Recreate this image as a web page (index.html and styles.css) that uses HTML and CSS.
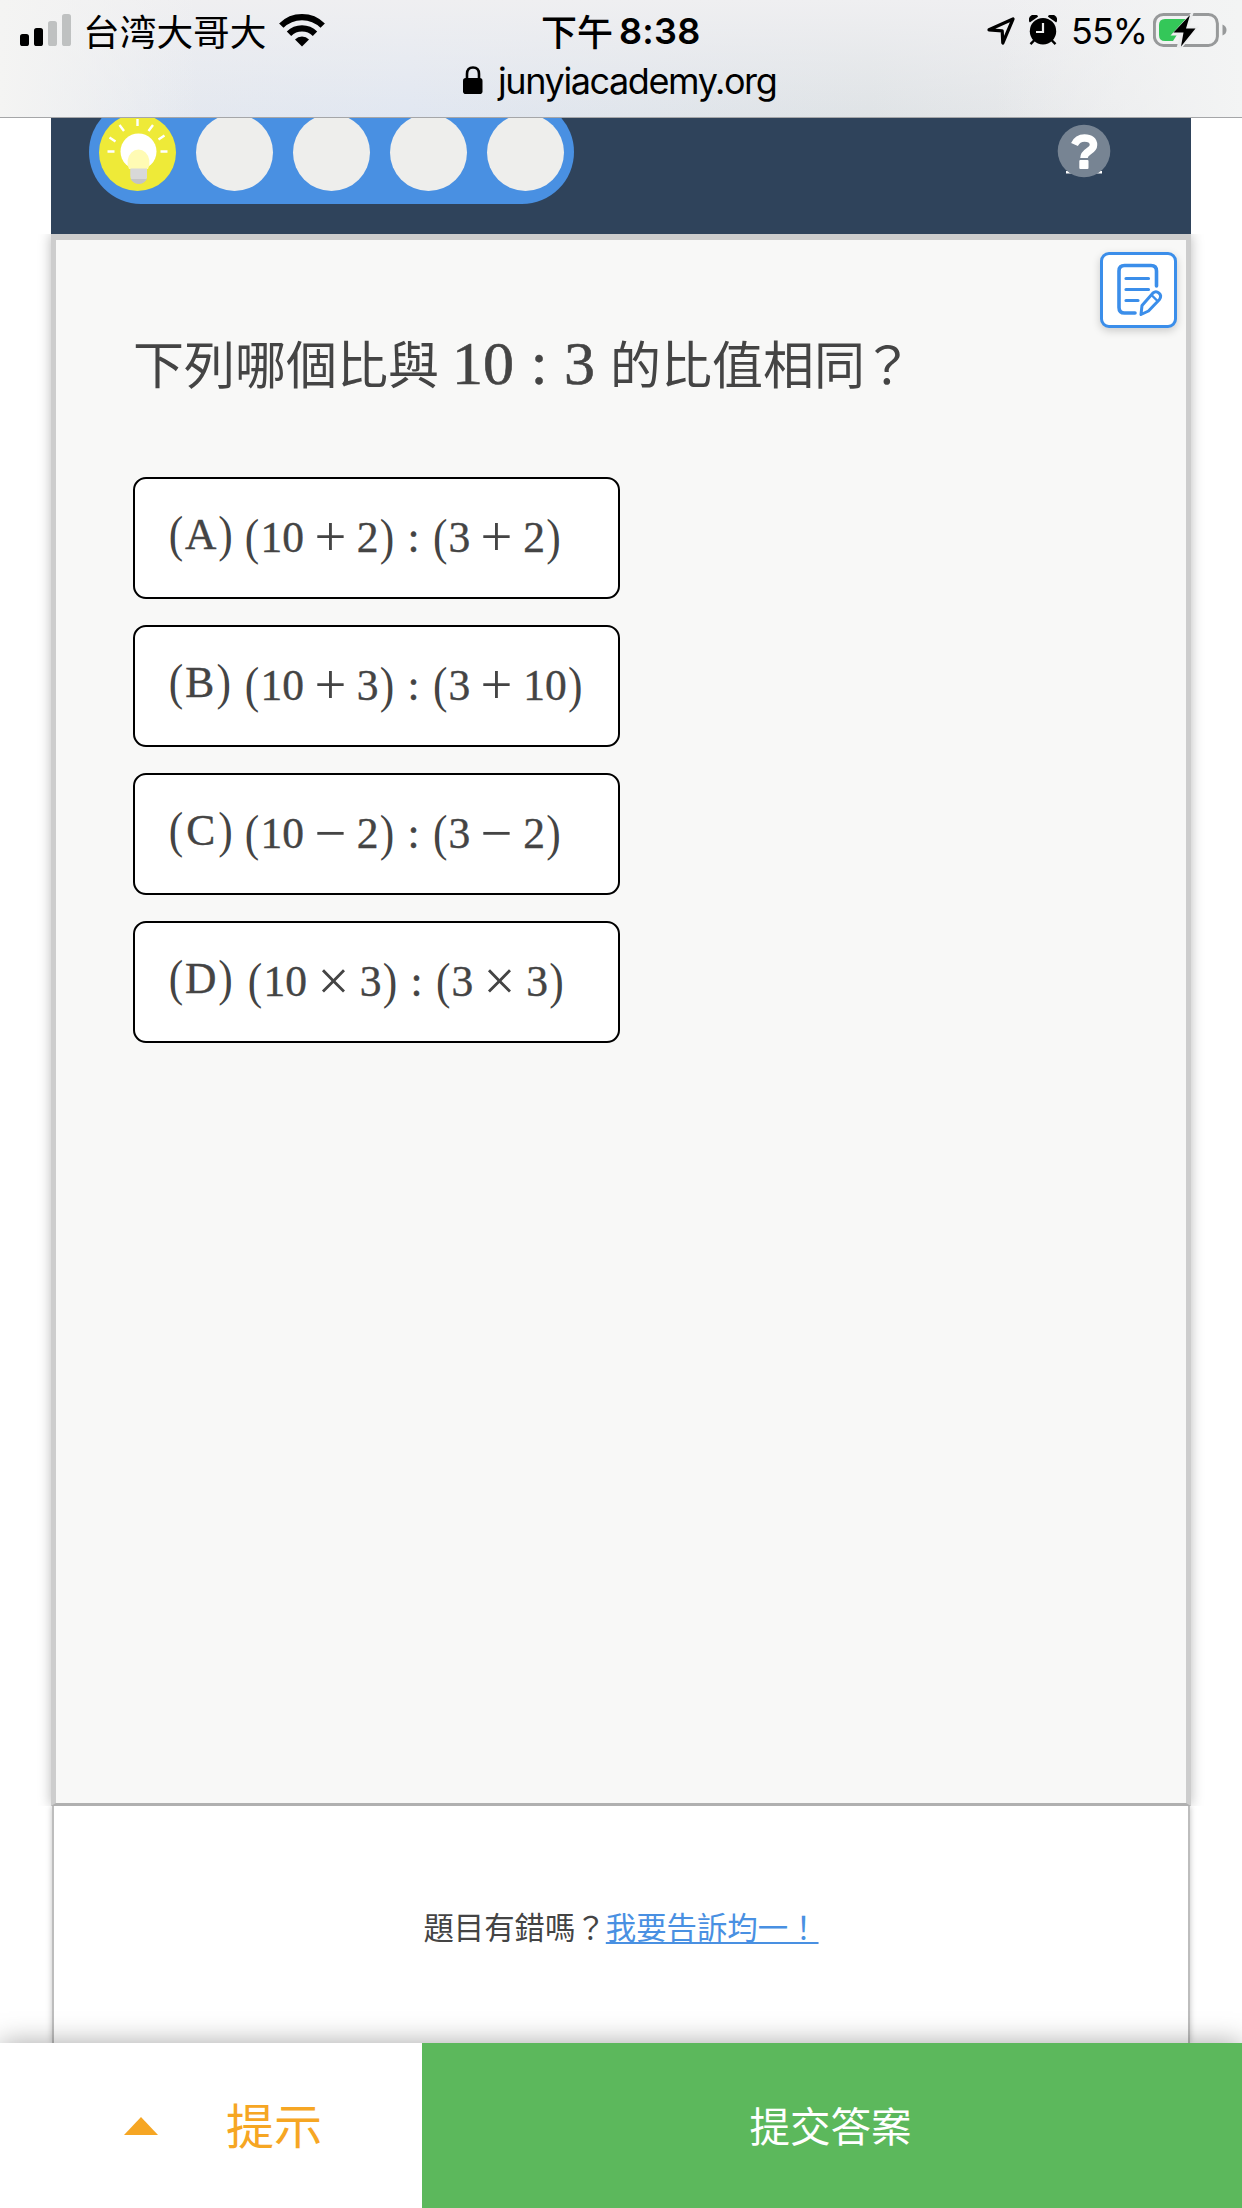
FILE: index.html
```
<!DOCTYPE html>
<html lang="zh-Hant">
<head>
<meta charset="utf-8">
<title>均一教育平台</title>
<link rel="stylesheet" href="styles.css">
</head>
<body>
<header class="browser-bar">
  <div class="status">
    <div class="status-left">
      <svg class="signal" width="52" height="34" viewBox="0 0 52 34"><rect x="0" y="20" width="9" height="12" rx="2.6"/><rect x="14" y="14" width="9" height="18" rx="2.6"/><g fill="#bfc1c1"><rect x="28" y="7" width="9" height="25" rx="2.6"/><rect x="42" y="0" width="9" height="32" rx="2.6"/></g></svg>
      <span class="carrier">台湾大哥大</span>
      <svg class="wifi" width="46" height="34" viewBox="0 0 46 34"><g fill="none" stroke="#000" stroke-width="6.2"><path d="M2.3 12.6a29.3 29.3 0 0 1 41.4 0"/><path d="M10 20.8a18.4 18.4 0 0 1 26 0"/></g><path d="M16 26.5a9.8 9.8 0 0 1 14 0L23 33.5z"/></svg>
    </div>
    <div class="clock"><span class="ampm">下午</span><span class="time">8:38</span></div>
    <div class="status-right">
      <svg class="locate" width="28" height="28" viewBox="0 0 28 28"><path d="M2 12.8 26 2 15.8 26l-.6-12.2z" fill="none" stroke="#000" stroke-width="3.2" stroke-linejoin="round"/></svg>
      <svg class="alarm" width="28" height="31" viewBox="0 0 28 31"><circle cx="14" cy="16.2" r="13.2"/><path d="M1 6.500A4.6 4.6 0 0 1 8.2 1.300zM27 6.500A4.6 4.6 0 0 0 19.8 1.300z" stroke="#000" stroke-width="1.500" stroke-linejoin="round"/><path d="m5.5 25-4 4.2M22.5 25l4 4.2" stroke="#000" stroke-width="2.4"/><path d="M14 8v9H7" fill="none" stroke="#eee" stroke-width="2.2"/></svg>
      <span class="percent">55%</span>
      <svg class="battery" width="74" height="36" viewBox="0 0 74 36"><rect x="1.4" y="2.4" width="63" height="31" rx="9" fill="none" stroke="#97999a" stroke-width="3"/><path d="M69.5 12.5q4 1.5 4 5.5t-4 5.5z" fill="#97999a"/><path d="M12 7h22L20 29h-8q-6 0-6-6V13q0-6 6-6z" fill="#34c759"/><path d="M38 1 17.5 23.5H27L23.5 36h5.5l17-21.5H36L40.500 1z" fill="#ecedee"/><path d="M37 3 20.500 20.500h10L28 34.500l14.500-18h-9.500z"/></svg>
    </div>
  </div>
  <div class="address">
    <svg class="lock" width="20" height="28" viewBox="0 0 20 28"><path d="M4 14V8q0-6.500 6-6.500T16 8v6" fill="none" stroke="#000" stroke-width="2.600"/><rect x="0" y="12" width="19.500" height="16" rx="2.800"/></svg>
    <span class="url">junyiacademy.org</span>
  </div>
</header>

<main class="page">
  <nav class="task-bar">
    <div class="progress">
      <span class="step step-hint">
        <svg width="77" height="80" viewBox="0 0 77 80"><g stroke="#fff" stroke-width="2.400"><path d="M8.500 37.500h7M61.500 37.500h7M10.500 23.500l6 4M65.500 21.500l-6 4M20.500 11l4.500 6M54 11l-4.500 6M38.500 5v7"/></g><circle cx="39.500" cy="37.500" r="18" fill="#fff"/><path d="M31.500 52h16.500v12q-3 5-8.200 5t-8.300-5z" fill="#d8d8d8"/><path d="M31.500 65h16.500q-3 5-8.200 5t-8.300-5z" fill="#c4c4c4"/><path d="M30 55a11 13 0 1 1 19 0z" fill="#fffbb4"/><path d="M31.500 54.500h16.500v8H31.500z" fill="#d8d8d8"/></svg>
      </span>
      <span class="step"></span><span class="step"></span><span class="step"></span><span class="step"></span>
    </div>
    <a class="help"><svg width="54" height="54" viewBox="0 0 54 54"><path d="M9 47h36v2.500H9z" fill="#fff"/><circle cx="27" cy="27" r="26.300" fill="#778493"/><path d="M17.500 20.500Q20.500 14 27.500 14c6 0 9 3 9 7 0 6.500-9.500 6-9.500 13" fill="none" stroke="#fff" stroke-width="7.500"/><rect x="22.300" y="36" width="9.200" height="9" rx="1" fill="#fff"/></svg></a>
  </nav>

  <section class="exercise">
    <button class="note"><svg width="48" height="54" viewBox="0 0 48 54"><g fill="none" stroke="#3b8eea" stroke-width="3.600" stroke-linecap="round" stroke-linejoin="round"><path d="M19 50H8.500Q3 50 3 44.500V8q0-5.500 5.500-5.500H35q5.500 0 5.500 5.500v15"/><path d="M10 15.500h22.500M10 26.500h22.500M10 37.500h12" stroke-width="3.200"/><path d="m25 51.500 1-9L37 30q3-2.500 6 .2t.5 6.300L32.500 48z" stroke-width="3"/><path d="m35.500 32 6 6" stroke-width="2.400"/></g></svg></button>
    <h1 class="question">下列哪個比與<span class="ratio"><i class="n2">10</i><i class="rel">:</i><i class="n1">3</i></span>的比值相同<span class="ask">？</span></h1>
    <ul class="choices">
      <li class="choice"><span class="label"><i class="p">(</i><i class="cap">A</i><i class="p">)</i></span><span class="math"><i class="p">(</i><i class="n2">10</i><i class="op">+</i><i class="n1">2</i><i class="p">)</i><i class="rel">:</i><i class="p">(</i><i class="n1">3</i><i class="op">+</i><i class="n1">2</i><i class="p">)</i></span></li>
      <li class="choice"><span class="label"><i class="p">(</i><i class="cap cap-b">B</i><i class="p">)</i></span><span class="math"><i class="p">(</i><i class="n2">10</i><i class="op">+</i><i class="n1">3</i><i class="p">)</i><i class="rel">:</i><i class="p">(</i><i class="n1">3</i><i class="op">+</i><i class="n2">10</i><i class="p">)</i></span></li>
      <li class="choice"><span class="label"><i class="p">(</i><i class="cap">C</i><i class="p">)</i></span><span class="math"><i class="p">(</i><i class="n2">10</i><i class="op">−</i><i class="n1">2</i><i class="p">)</i><i class="rel">:</i><i class="p">(</i><i class="n1">3</i><i class="op">−</i><i class="n1">2</i><i class="p">)</i></span></li>
      <li class="choice"><span class="label label-d"><i class="p">(</i><i class="cap">D</i><i class="p">)</i></span><span class="math"><i class="p">(</i><i class="n2">10</i><i class="op">×</i><i class="n1">3</i><i class="p">)</i><i class="rel">:</i><i class="p">(</i><i class="n1">3</i><i class="op">×</i><i class="n1">3</i><i class="p">)</i></span></li>
    </ul>
  </section>

  <section class="report">題目有錯嗎？<a class="report-link">我要告訴均一！</a></section>
</main>

<footer class="actions">
  <button class="hint"><span class="caret"></span><span class="hint-text">提示</span></button>
  <button class="submit">提交答案</button>
</footer>
</body>
</html>
```
FILE: styles.css
```
* { box-sizing: border-box; }

body {
  margin: 0;
  width: 1242px;
  height: 2208px;
  overflow: hidden;
  display: flex;
  flex-direction: column;
  background: #fff;
  color: #444;
  font-family: "Noto Sans CJK TC", sans-serif;
}

button { font: inherit; border: 0; padding: 0; margin: 0; }
i { font-style: normal; }
svg { display: block; flex: none; }

/* browser chrome */
.browser-bar {
  flex: none;
  height: 118px;
  border-bottom: 1px solid #a5a6a8;
  color: #000;
  background:
    linear-gradient(90deg, #f4f4f3 0%, rgba(244,244,243,0) 16%, rgba(242,243,243,0) 80%, #f3f4f4 100%),
    linear-gradient(rgba(239,239,241,1), rgba(239,239,241,0)),
    linear-gradient(90deg, #e6e9ee 0%, #e1e7f1 33%, #dfe3e6 70%, #e8e9eb 90%);
}
.status {
  display: grid;
  grid-template-columns: 541px 1fr 255px;
  height: 62px;
}
.status-left, .status-right, .clock { display: flex; align-items: flex-start; }
.status-left { padding-left: 20px; }
.signal { margin-top: 14px; }
.carrier {
  margin-left: 11px;
  font: 36.700px/60px "Noto Sans CJK SC", sans-serif;
  width: 186px;
  white-space: nowrap;
}
.wifi { margin: 13px 0 0 10px; }
.clock { line-height: 60px; }
.ampm { font-size: 36px; font-weight: 500; width: 78px; }
.time { font: 600 36px/62px Inter, sans-serif; letter-spacing: .3px; }
.locate { margin-top: 17px; }
.alarm { margin: 15px 0 0 14px; }
.percent { font: 36px/63px Inter, sans-serif; margin-left: 14px; width: 82px; letter-spacing: -1px; }
.battery { margin-top: 12px; }
.address { display: flex; padding-left: 463px; height: 44px; }
.lock { margin-top: 4px; }
.url { font: 36px/38px Inter, sans-serif; margin-left: 15px; letter-spacing: -1.400px; }

/* page */
.page {
  flex: 1;
  margin: 0 51px;
  min-height: 0;
  display: flex;
  flex-direction: column;
}
.task-bar {
  flex: none;
  height: 116px;
  overflow: hidden;
  background: #2f435b;
  display: flex;
  justify-content: space-between;
  align-items: flex-start;
  padding: 0 80px 0 38px;
}
.progress {
  display: flex;
  margin-top: -18px;
  width: 485px;
  height: 104px;
  border-radius: 52px;
  background: #4990e2;
  align-items: center;
  justify-content: space-around;
}
.step { width: 77px; height: 77px; border-radius: 50%; background: #eeeeec; overflow: hidden; }
.step-hint { background: #eeea38; }
.help { margin-top: 6px; }

.exercise {
  flex: none;
  height: 1572px;
  border: 5px solid #cdcdcd;
  border-top-width: 6px;
  border-bottom: 3px solid #b0b0b0;
  background: #f8f8f7;
  box-shadow: 0 0 12px rgba(0,0,0,.28);
  clip-path: inset(0 -16px);
  display: flex;
  flex-direction: column;
}
.note {
  align-self: flex-end;
  margin: 12px 9px 0 0;
  width: 77px;
  height: 76px;
  border: 3px solid #3b8eea;
  border-radius: 9px;
  background: #fff;
  box-shadow: 0 3px 8px rgba(0,0,0,.18);
  display: flex;
  align-items: center;
  justify-content: center;
  padding-left: 3px;
}
.question {
  margin: -4px 0 0 77px;
  font-size: 51px;
  font-weight: 400;
  line-height: 76px;
  height: 153px;
  white-space: nowrap;
}
.ratio {
  font: 62px/60px "Liberation Serif", serif;
  margin: 0 15px 0 13px;
  -webkit-text-stroke: .6px #444;
}
.ratio i, .label i, .math i { display: inline-block; text-align: center; white-space: nowrap; }
.ratio .n2 { width: 62px; }
.ratio .rel { width: 50px; }
.ratio .n1 { width: 31px; }
.ask { margin-left: -3px; }

.choices { list-style: none; margin: 0 0 0 77px; padding: 0; display: flex; flex-direction: column; gap: 26px; }
.choice {
  width: 487px;
  height: 122px;
  padding-left: 32.500px;
  border: 2.500px solid #000;
  border-radius: 13px;
  background: #fff;
  display: flex;
  align-items: flex-start;
  font: 43.500px/60px "Liberation Serif", serif;
}
.label { display: flex; width: 76px; margin-top: 25px; }
.label-d { width: 79px; }
.math { display: flex; margin-top: 28px; }
.p { width: .389em; transform: scaleY(1.16); }
.cap { width: .75em; }
.cap-b { width: .708em; }
.cap, .choice .n1, .choice .n2, .rel { -webkit-text-stroke: .4px #444; }
.choice .n1 { width: .5em; }
.choice .n2 { width: 1em; }
.op { width: 1.215em; transform: scale(1.3); }
.choice .rel { width: .834em; }

.report {
  flex: 1;
  margin: 0 1px;
  border: solid #bdbdbd;
  border-width: 0 2px;
  box-shadow: 0 0 6px rgba(0,0,0,.25);
  clip-path: inset(0 -12px);
  padding-top: 98px;
  text-align: center;
  font-size: 30.400px;
  line-height: 44px;
}
.report-link {
  color: #4990e2;
  text-decoration: underline;
  text-decoration-thickness: 2px;
  text-underline-offset: 3px;
}

/* bottom actions */
.actions {
  flex: none;
  position: relative;
  height: 165px;
  display: grid;
  grid-template-columns: 422px 1fr;
  box-shadow: 0 0 26px rgba(0,0,0,.35);
}
.hint {
  background: #fff;
  color: #f6a623;
  font-size: 48px;
  display: flex;
  align-items: center;
  padding-left: 124px;
}
.hint-text { padding-bottom: 5px; }
.caret {
  margin-right: 68px;
  border: 17.500px solid transparent;
  border-top: 0;
  border-bottom: 18px solid #f6a623;
}
.submit { background: #5cb85c; color: #fff; font-size: 40.500px; padding: 0 3px 3px 0; }
```
